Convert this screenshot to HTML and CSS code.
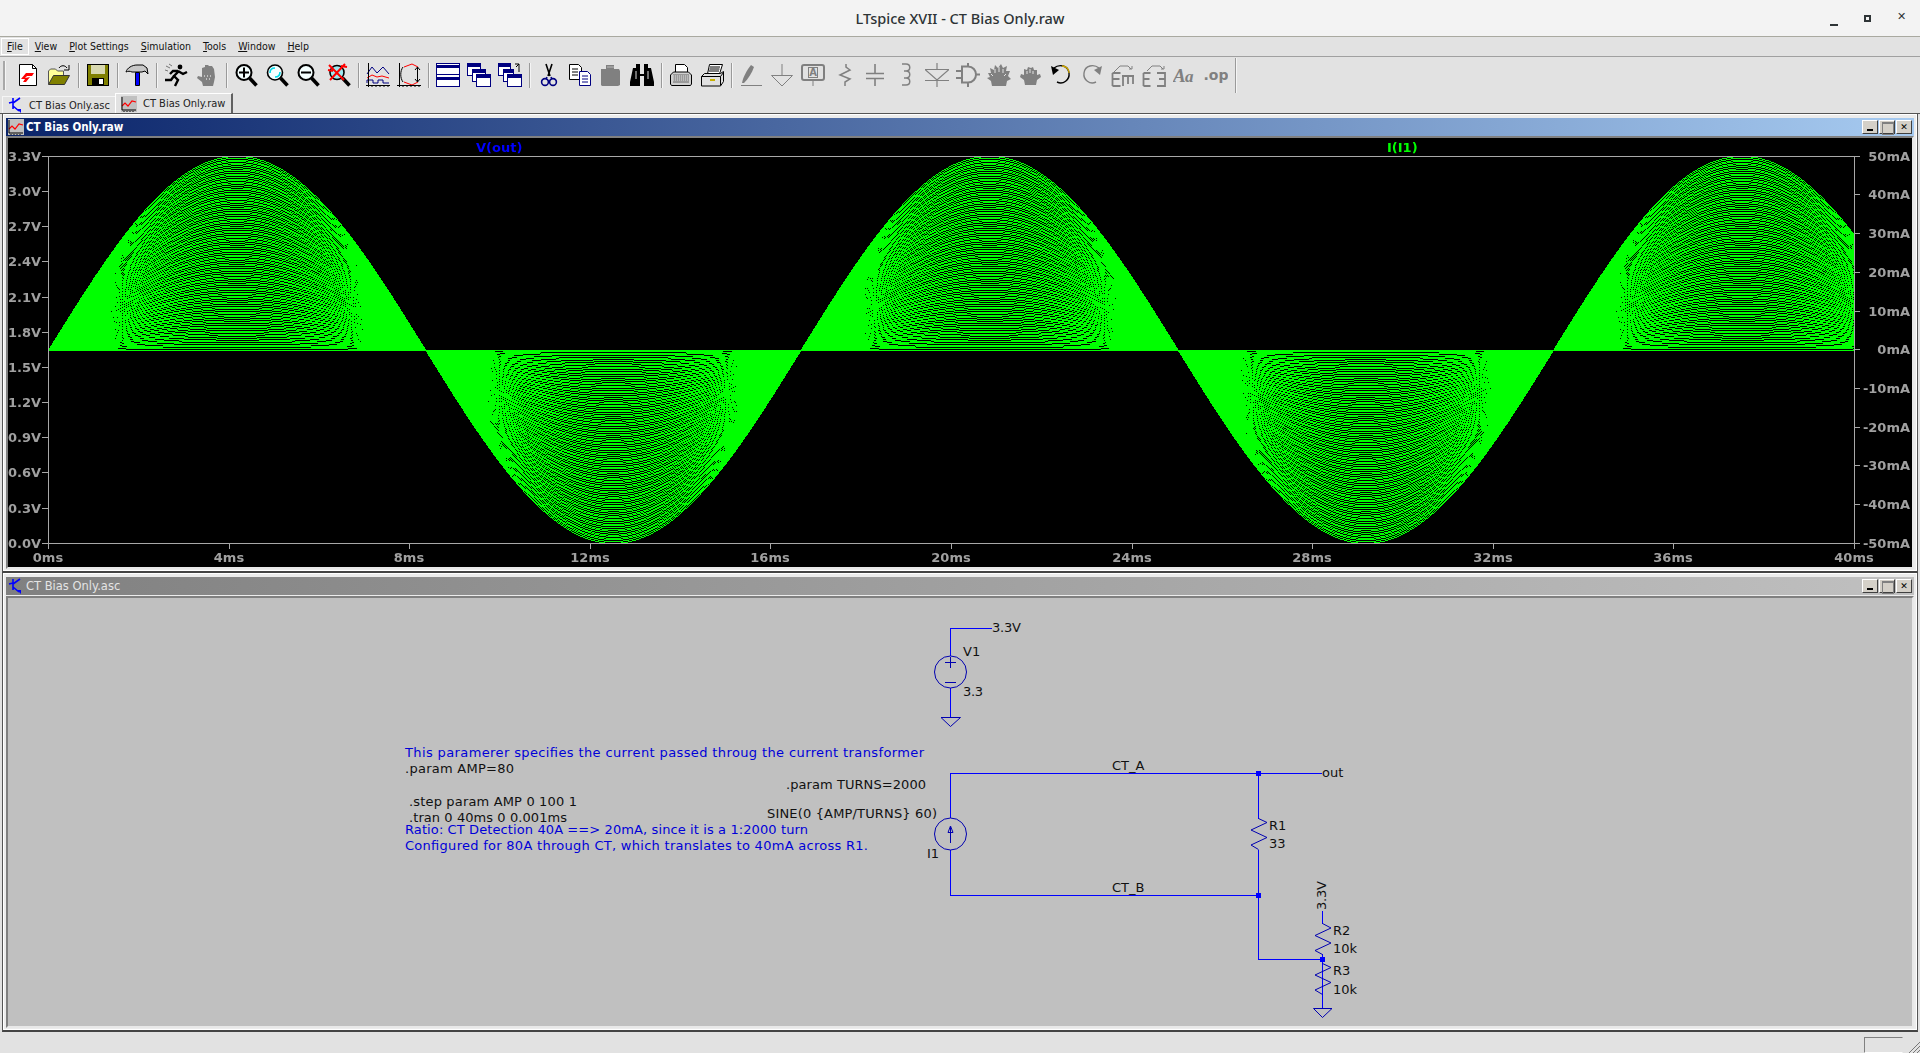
FILE: index.html
```html
<!DOCTYPE html>
<html lang="en">
<head>
  <meta charset="UTF-8" />
  <title>LTspice XVII - CT Bias Only.raw</title>
  <link rel="stylesheet" href="styles.css">
</head>
<body>

<svg class="defs" width="0" height="0">
  <symbol id="npn" viewBox="0 0 16 16">
    <path d="M5 1v11M5 5l-4 1M5 6l7-5M5 9l6 5" fill="none" stroke="#00f" stroke-width="1.6"/>
    <path d="M9 12h4v4z" fill="#00f"/>
  </symbol>
  <symbol id="miniplot" viewBox="0 0 16 16">
    <rect width="16" height="16" fill="#c0c0c0"/>
    <path d="M1 10l3-3 3 3 4-5 4 1" fill="none" stroke="#f00" stroke-width="1.2"/>
    <path d="M1 1v13h14M3 15v1M6 15v1M9 15v1M12 15v1" fill="none" stroke="#000"/>
  </symbol>
</svg>

<!-- Desktop title bar -->
<header class="titlebar">
  <span class="titlebar-text">LTspice XVII - CT Bias Only.raw</span>
  <div class="wm-buttons">
    <span class="wm-min"></span>
    <span class="wm-max"></span>
    <span class="wm-close">&#10005;</span>
  </div>
</header>

<!-- Menu -->
<nav class="menubar">
  <span class="menu-item menu-active"><u>F</u>ile</span>
  <span class="menu-item"><u>V</u>iew</span>
  <span class="menu-item"><u>P</u>lot Settings</span>
  <span class="menu-item"><u>S</u>imulation</span>
  <span class="menu-item"><u>T</u>ools</span>
  <span class="menu-item"><u>W</u>indow</span>
  <span class="menu-item"><u>H</u>elp</span>
</nav>

<!-- Toolbar -->
<div class="toolbar">
  <span class="grip"></span>
  <div class="tool"><svg class="ic" viewBox="0 0 24 24"><path d="M3.5 1.500h13l4 4v17h-17z" fill="#fff" stroke="#000"/><path d="M16.500 1.500v4h4" fill="none" stroke="#000"/><path d="M5 16l5-6h8l-2 3h-5l-2 2 5-1-4 5H7l2-3z" fill="#f00"/></svg></div>
  <div class="tool"><svg class="ic" viewBox="0 0 24 24"><path d="M1.500 21V8l2-2h5l2 2h6v4" fill="#ffff99" stroke="#555"/><path d="M1.500 21.500l5-9h16l-5 9z" fill="#808000" stroke="#333"/><path d="M12 5c2-3 6-3 8 0" fill="none" stroke="#000"/><path d="M22 2v5h-5" fill="none" stroke="#000"/></svg></div>
  <span class="sep"></span>
  <div class="tool"><svg class="ic" viewBox="0 0 24 24"><rect x="1.500" y="1.500" width="21" height="21" fill="#808000" stroke="#000"/><rect x="5" y="2" width="14" height="9" fill="#d8d8b0"/><rect x="6" y="15" width="12" height="7" fill="#000"/><rect x="13" y="16" width="4" height="5" fill="#fff"/></svg></div>
  <span class="sep"></span>
  <div class="tool"><svg class="ic" viewBox="0 0 24 24"><path d="M1 9c1-4 6-7 11-7h6l4 3 1 6-3-3-3 1H7C5 8 3 8 1 9z" fill="#c8c8c8" stroke="#000"/><path d="M10.500 9.500h4v13h-4z" fill="#00f" stroke="#000"/></svg></div>
  <span class="sep"></span>
  <div class="tool"><svg class="ic" viewBox="0 0 24 24"><circle cx="16" cy="4" r="2.400"/><path d="M15 8l-5 5 4 4-3 6M10 13l-3 4H1M14 8l5 3 4-2M14 8H9L6 11" fill="none" stroke="#000" stroke-width="2.400"/><path d="M2 3l4 2M1 7l3 1M5 1l3 2" fill="none" stroke="#777"/></svg></div>
  <div class="tool"><svg class="ic" viewBox="0 0 24 24"><path d="M8 23l-1-4-5-4 1-2 4 1V5l3-1V2l3 0 1 1 3 0 2 3 1 8-1 5-1 4z" fill="#808080"/><path d="M9 13h1M12 13h1M15 13h1M11 16h1M14 16h1" stroke="#fff"/></svg></div>
  <span class="sep"></span>
  <div class="tool"><svg class="ic" viewBox="0 0 24 24"><circle cx="10" cy="9.500" r="7.500" fill="#f4ffff" stroke="#000" stroke-width="2"/><path d="M15.500 15l7 7.500" stroke="#000" stroke-width="3.600"/><path d="M5 9.500h10M10 4.500v10" stroke="#000" stroke-width="2"/></svg></div>
  <div class="tool"><svg class="ic" viewBox="0 0 24 24"><circle cx="10" cy="9.500" r="7.500" fill="#f4ffff" stroke="#000" stroke-width="1.600"/><path d="M15.500 15l7 7.500" stroke="#000" stroke-width="3.600"/><path d="M5 10c0-3 2-5 5-5M15 9c0 3-2 5-5 5" fill="none" stroke="#00d8e8" stroke-width="1.600"/></svg></div>
  <div class="tool"><svg class="ic" viewBox="0 0 24 24"><circle cx="10" cy="9.500" r="7.500" fill="#f4ffff" stroke="#000" stroke-width="2"/><path d="M15.500 15l7 7.500" stroke="#000" stroke-width="3.600"/><path d="M5 9.500h10" stroke="#000" stroke-width="2"/></svg></div>
  <div class="tool"><svg class="ic" viewBox="0 0 24 24"><circle cx="10" cy="9.500" r="7" fill="#9fe8f0" stroke="#000" stroke-width="1.600"/><path d="M15.500 15l7 7.500" stroke="#000" stroke-width="3.600"/><path d="M2 2l15 15M18 1L3 17M1 7l5 1M14 3l6 1" stroke="#f00" stroke-width="2"/></svg></div>
  <span class="sep"></span>
  <div class="tool"><svg class="ic" viewBox="0 0 24 24"><path d="M1 11l5-7 5 6 6-6 6 7" fill="none" stroke="#000080"/><path d="M1 15l5-3 5 2 5-1 7 2" fill="none" stroke="#f00"/><path d="M1 20v-3h6v3h5v-3h5v3h6" fill="none" stroke="#000080"/><path d="M2.500 0v24M0 22.500h24M6 23v1M10 23v1M14 23v1M18 23v1M22 23v1" fill="none" stroke="#000"/></svg></div>
  <div class="tool"><svg class="ic" viewBox="0 0 24 24"><path d="M6 4C3 8 3 15 6 19" fill="none" stroke="#000"/><path d="M7 4l8-3 6 3M7 19l8 3 6-3" fill="none" stroke="#f00"/><path d="M20.500 4v15M18 7l2.500-3L23 7M18 16l2.500 3 2.500-3" fill="none" stroke="#000"/><path d="M2.500 0v24M0 22.500h24M6 23v1M10 23v1M14 23v1M18 23v1M22 23v1" fill="none" stroke="#000"/></svg></div>
  <span class="sep"></span>
  <div class="tool"><svg class="ic" viewBox="0 0 24 24"><rect x=".5" y=".5" width="23" height="23" fill="#fff" stroke="#000080"/><rect x="0" y="2" width="24" height="3" fill="#000080"/><rect x="0" y="14" width="24" height="3" fill="#000080"/><path d="M0 11.500h24" stroke="#000080"/></svg></div>
  <div class="tool"><svg class="ic" viewBox="0 0 24 24"><rect x=".5" y=".5" width="13" height="12" fill="#fff" stroke="#000080"/><rect y="1" width="14" height="3" fill="#000080"/><rect x="5.500" y="6.500" width="13" height="12" fill="#fff" stroke="#000080"/><rect x="5" y="7" width="14" height="3" fill="#000080"/><rect x="9.500" y="11.500" width="14" height="12" fill="#fff" stroke="#000080"/><rect x="9" y="12" width="15" height="3" fill="#000080"/></svg></div>
  <div class="tool"><svg class="ic" viewBox="0 0 24 24"><rect x=".5" y=".5" width="12" height="12" fill="#fff" stroke="#000080"/><rect y="1" width="13" height="3" fill="#000080"/><rect x="5.500" y="6.500" width="10" height="12" fill="#fff" stroke="#000080"/><rect x="5" y="7" width="11" height="3" fill="#000080"/><rect x="9.500" y="11.500" width="14" height="12" fill="#fff" stroke="#000080"/><rect x="9" y="12" width="15" height="3" fill="#000080"/><path d="M21 9V1M21 1l-3 3" fill="none" stroke="#000"/><path d="M21 1h-4" stroke="#000"/></svg></div>
  <span class="sep"></span>
  <div class="tool"><svg class="ic" viewBox="0 0 24 24"><path d="M9 1l4 12M15 1l-4 12" stroke="#000" stroke-width="1.600"/><circle cx="8" cy="19" r="3.400" fill="none" stroke="#000080" stroke-width="1.600"/><circle cx="16" cy="19" r="3.400" fill="none" stroke="#000080" stroke-width="1.600"/><path d="M10 14l-1 2M14 14l1 2" stroke="#000080" stroke-width="1.600"/></svg></div>
  <div class="tool"><svg class="ic" viewBox="0 0 24 24"><path d="M1.500 1.500h9l3 3v12h-12z" fill="#fff" stroke="#000"/><path d="M4 6h6M4 9h6M4 12h6" stroke="#000"/><path d="M11.500 8.500h8l3 3v11h-11z" fill="#fff" stroke="#000080"/><path d="M14 13h6M14 16h6M14 19h6" stroke="#000080"/></svg></div>
  <div class="tool"><svg class="ic" viewBox="0 0 24 24"><path d="M2 6h5V2h8v4h5l1 2v14l-2 1H3l-1-1z" fill="#808080"/><path d="M8 4h7" stroke="#bbb"/></svg></div>
  <div class="tool"><svg class="ic" viewBox="0 0 24 24"><path d="M3 5h3V1h4v10h4V1h4v4h3l3 14v4H14V13h-4v10H0v-4z"/><path d="M6 8v8M18 8v8" stroke="#ddd"/></svg></div>
  <span class="sep"></span>
  <div class="tool"><svg class="ic" viewBox="0 0 24 24"><path d="M6.500 9.500V1.500h9l3 3v5" fill="#fff" stroke="#000"/><path d="M1.500 12l3-3h15l3 3v9l-1 1.500h-19l-1-1.500z" fill="#d0d0d0" stroke="#000"/><rect x="4" y="11" width="16" height="9" fill="#9a9a9a"/><path d="M4 13h16M4 15h16M4 17h16" stroke="#ddd" stroke-dasharray="1 1"/></svg></div>
  <div class="tool"><svg class="ic" viewBox="0 0 24 24"><path d="M7.500 11l2-9.500h13l-3 9.500z" fill="#fff" stroke="#000"/><path d="M10 4h10M9.500 6h10M9 8h10" stroke="#000"/><path d="M1.500 13.500l3-3h16l3-2v10l-3 4.500h-19z" fill="#e0e0e0" stroke="#000"/><path d="M1.500 13.500h19v9M20.500 13.500l3-4" fill="none" stroke="#000"/><path d="M10 17h5" stroke="#c8b000" stroke-width="2"/></svg></div>
  <span class="sep"></span>
  <div class="tool"><svg class="ic" viewBox="0 0 24 24"><path d="M3 20c1-6 5-13 9-18l3 2c-2 6-6 12-10 16z" fill="#808080"/><path d="M2 22.500h21" stroke="#808080"/></svg></div>
  <div class="tool"><svg class="ic ic-off" viewBox="0 0 24 24"><path d="M12 1v12M1.500 12.500h21L12 23z"/></svg></div>
  <div class="tool"><svg class="ic ic-off" viewBox="0 0 24 24"><rect x="1" y="2" width="22" height="15" rx="2" stroke-width="2"/><rect x="7.500" y="4.500" width="9" height="10"/><text x="12" y="13" class="ic-letter" text-anchor="middle">A</text><path d="M12 17v6"/></svg></div>
  <div class="tool"><svg class="ic ic-off" viewBox="0 0 24 24"><path d="M14 1v3l4 3-10 5 10 4-5 3v4" stroke-width="1.500"/></svg></div>
  <div class="tool"><svg class="ic ic-off" viewBox="0 0 24 24"><path d="M12 1v9M3 10.500h18M3 15.500h18M12 16v7" stroke-width="1.600"/></svg></div>
  <div class="tool"><svg class="ic ic-off" viewBox="0 0 24 24"><path d="M8 1h4c5 0 5 7 0 7h-2M10 8h2c5 0 5 7 0 7h-2M10 15h2c5 0 5 7 0 7H8" stroke-width="1.500"/></svg></div>
  <div class="tool"><svg class="ic ic-off" viewBox="0 0 24 24"><path d="M12 0v6M0 6.500h24L12 17zM0 17.500h24M12 18v6" stroke-width="1.200"/></svg></div>
  <div class="tool"><svg class="ic ic-off" viewBox="0 0 24 24"><path d="M6 3.500h6c5 0 8 4 8 8s-3 8-8 8H6zM0 8h6M0 15h6M20 11.500h4M12 0v3M12 20v4" stroke-width="2"/></svg></div>
  <div class="tool"><svg class="ic" viewBox="0 0 24 24"><path d="M5 23l-1-5-4-3 3-1-2-4 3 0-1-5 4 2 1-5 3 3 3-4 2 4 4-2-1 5 4 0-2 5 3 3-4 2-1 5z" fill="#808080"/><path d="M8 6v4M12 4v5M16 6v4M4 11l2 2M19 11l-2 2" stroke="#e2e2e2"/></svg></div>
  <div class="tool"><svg class="ic" viewBox="0 0 24 24"><path d="M7 22l-1-5-4-3 1-3 3 1V6l3 1 1-3 3 1 2-1 1 3h3v5l3-1 1 3-4 3-1 5z" fill="#808080"/><path d="M9 8v3M12 6v4M15 8v3" stroke="#e2e2e2"/></svg></div>
  <div class="tool"><svg class="ic" viewBox="0 0 24 24"><path d="M5 5c5-4 14-3 15 5 1 7-6 12-12 9" fill="none" stroke="#000" stroke-width="1.400"/><path d="M13 3c4 0 7 3 7 7" fill="none" stroke="#d0a800" stroke-width="1.400"/><path d="M2 3l2 9 6-5z"/></svg></div>
  <div class="tool"><svg class="ic" viewBox="0 0 24 24"><path d="M19 5c-5-4-14-3-15 5-1 7 6 12 12 9" fill="none" stroke="#808080" stroke-width="1.400"/><path d="M22 3l-2 9-6-5z" fill="#808080"/></svg></div>
  <div class="tool"><svg class="ic ic-off" viewBox="0 0 24 24"><path d="M3 9l6-6h8l3 3M18 6l3 0 0-3" stroke-width="1"/><path d="M1.500 10h8M1.500 10v13M1.500 16h7M1.500 23h8M11 13h12M12 13v10M17 13v8M22 13v8" stroke-width="1.800"/></svg></div>
  <div class="tool"><svg class="ic ic-off" viewBox="0 0 24 24"><path d="M5 8l5-5h8l3 3M19 6l3 0 0-3" stroke-width="1"/><path d="M1.500 10h7M1.500 10v13M1.500 16h6M1.500 23h7M15 10h8v13h-8M17 16h6" stroke-width="1.800"/></svg></div>
  <div class="tool"><svg class="ic" viewBox="0 0 24 24"><text x="0" y="19" class="ic-aa">A</text><text x="12" y="19" class="ic-aa-small">a</text></svg></div>
  <div class="tool"><svg class="ic" viewBox="0 0 24 24"><text x="12" y="17" class="ic-op" text-anchor="middle">.op</text></svg></div>
  <span class="sep sep-tall"></span>
</div>

<!-- Document tabs -->
<div class="tabs">
  <div class="tab">
    <svg class="tab-icon"><use href="#npn"/></svg>
    <span>CT Bias Only.asc</span>
  </div>
  <div class="tab tab-active">
    <svg class="tab-icon"><use href="#miniplot"/></svg>
    <span>CT Bias Only.raw</span>
  </div>
</div>

<!-- MDI area -->
<main class="mdi">
  <section class="win">
    <div class="win-title win-title-active">
      <svg class="win-icon"><use href="#miniplot"/></svg>
      <span class="win-name win-name-active">CT Bias Only.raw</span>
      <div class="win-buttons">
        <span class="win-btn win-btn-min"></span>
        <span class="win-btn win-btn-max"></span>
        <span class="win-btn win-btn-close">&#10005;</span>
      </div>
    </div>
    <div class="win-body plot">
      <canvas id="traces" width="1904" height="429"></canvas>
      <svg class="plot-axes" viewBox="8 138 1904 429">
        <path class="axis" d="M42 156.500H1860M42 543.500H1860M48.500 156V549M1854.500 156V549
          M42 191.500h6M42 226.500h6M42 261.500h6M42 297.500h6M42 332.500h6M42 367.500h6M42 402.500h6M42 437.500h6M42 472.500h6M42 508.500h6
          M1855 194.500h5M1855 233.500h5M1855 272.500h5M1855 311.500h5M1855 349.500h5M1855 388.500h5M1855 427.500h5M1855 465.500h5M1855 504.500h5
          M229.500 544v5M409.500 544v5M590.500 544v5M770.500 544v5M951.500 544v5M1132.500 544v5M1312.500 544v5M1493.500 544v5M1673.500 544v5"/>
        <text class="trace-v" x="476" y="152">V(out)</text>
        <text class="trace-i" x="1387" y="152">I(I1)</text>
        <g class="ticks ticks-end">
          <text x="41" y="161">3.3V</text>
          <text x="41" y="196">3.0V</text>
          <text x="41" y="231">2.7V</text>
          <text x="41" y="266">2.4V</text>
          <text x="41" y="302">2.1V</text>
          <text x="41" y="337">1.8V</text>
          <text x="41" y="372">1.5V</text>
          <text x="41" y="407">1.2V</text>
          <text x="41" y="442">0.9V</text>
          <text x="41" y="477">0.6V</text>
          <text x="41" y="513">0.3V</text>
          <text x="41" y="548">0.0V</text>
          <text x="1910" y="161">50mA</text>
          <text x="1910" y="199">40mA</text>
          <text x="1910" y="238">30mA</text>
          <text x="1910" y="277">20mA</text>
          <text x="1910" y="316">10mA</text>
          <text x="1910" y="354">0mA</text>
          <text x="1910" y="393">-10mA</text>
          <text x="1910" y="432">-20mA</text>
          <text x="1910" y="470">-30mA</text>
          <text x="1910" y="509">-40mA</text>
          <text x="1910" y="548">-50mA</text>
        </g>
        <g class="ticks ticks-mid">
          <text x="48" y="562">0ms</text>
          <text x="229" y="562">4ms</text>
          <text x="409" y="562">8ms</text>
          <text x="590" y="562">12ms</text>
          <text x="770" y="562">16ms</text>
          <text x="951" y="562">20ms</text>
          <text x="1132" y="562">24ms</text>
          <text x="1312" y="562">28ms</text>
          <text x="1493" y="562">32ms</text>
          <text x="1673" y="562">36ms</text>
          <text x="1854" y="562">40ms</text>
        </g>
      </svg>
    </div>
  </section>

  <section class="win">
    <div class="win-title win-title-idle">
      <svg class="win-icon"><use href="#npn"/></svg>
      <span class="win-name">CT Bias Only.asc</span>
      <div class="win-buttons">
        <span class="win-btn win-btn-min"></span>
        <span class="win-btn win-btn-max"></span>
        <span class="win-btn win-btn-close">&#10005;</span>
      </div>
    </div>
    <div class="win-body schematic">
      <svg class="sch" viewBox="8 598 1904 428">
        <path class="wire" d="M950.500 656V628.500H992M950.500 688V717.500"/>
        <path class="wire" d="M950.500 818V773.500H1322M950.500 850V895.500H1258.500M1258.500 773.500V818.500M1258.500 849.500V959.500H1322.500"/>
        <path class="wire" d="M1322.500 911V923.500M1322.500 954V1008"/>
        <path class="sym" d="M941 717.500H960.500L950.500 726.500Z"/>
        <path class="sym" d="M1313.500 1008.500H1332L1322.500 1017.500Z"/>
        <circle class="sym" cx="950.500" cy="672" r="16"/>
        <circle class="sym" cx="950.500" cy="834" r="16"/>
        <path class="sym" d="M945 662.500H956M950.500 657V668M945 682.500H956"/>
        <path class="sym" d="M950.500 843V827M948 832.500L950.500 826L953 832.500Z"/>
        <path class="sym" d="M1258.500 818.500L1267 822.500L1251 830L1267 837.500L1251 845L1258.500 849.500"/>
        <path class="sym" d="M1322.500 923.500L1331 928L1315 935.500L1331 943L1315 950.500L1322.500 954.500"/>
        <path class="sym" d="M1322.500 963.500L1331 967.500L1315 975L1331 982.500L1315 990L1322.500 994.500"/>
        <rect class="dot" x="1256" y="771" width="5" height="5"/>
        <rect class="dot" x="1256" y="893" width="5" height="5"/>
        <rect class="dot" x="1320" y="957" width="5" height="5"/>

        <text class="note" x="405" y="757" textLength="519">This paramerer specifies the current passed throug the current transformer</text>
        <text class="note" x="405" y="834" textLength="403">Ratio: CT Detection 40A ==&gt; 20mA, since it is a 1:2000 turn</text>
        <text class="note" x="405" y="850" textLength="463">Configured for 80A through CT, which translates to 40mA across R1.</text>
        <text class="lbl" x="405" y="773" textLength="109">.param AMP=80</text>
        <text class="lbl" x="786" y="789" textLength="140">.param TURNS=2000</text>
        <text class="lbl" x="409" y="806" textLength="168">.step param AMP 0 100 1</text>
        <text class="lbl" x="409" y="822" textLength="158">.tran 0 40ms 0 0.001ms</text>
        <text class="lbl" x="767" y="818" textLength="170">SINE(0 {AMP/TURNS} 60)</text>
        <text class="lbl" x="992" y="632" textLength="29">3.3V</text>
        <text class="lbl" x="963" y="656">V1</text>
        <text class="lbl" x="963" y="696" textLength="20">3.3</text>
        <text class="lbl" x="927" y="858">I1</text>
        <text class="lbl" x="1112" y="770">CT_A</text>
        <text class="lbl" x="1112" y="892">CT_B</text>
        <text class="lbl" x="1322" y="777">out</text>
        <text class="lbl" x="1269" y="830">R1</text>
        <text class="lbl" x="1269" y="848">33</text>
        <text class="lbl" x="1333" y="935">R2</text>
        <text class="lbl" x="1333" y="953">10k</text>
        <text class="lbl" x="1333" y="975">R3</text>
        <text class="lbl" x="1333" y="994">10k</text>
        <text class="lbl" transform="translate(1326 910) rotate(-90)" textLength="29">3.3V</text>
      </svg>
    </div>
  </section>
</main>

<footer class="statusbar">
  <span class="status-cell"></span>
  <svg class="status-grip" viewBox="0 0 11 11"><path d="M0 11L11 0M4 11L11 4M8 11L11 8" stroke="#777" fill="none"/></svg>
</footer>

<script src="plot.js"></script>
</body>
</html>
```

FILE: styles.css
```css
* {
  box-sizing: border-box;
}
html, body {
  margin: 0;
  padding: 0;
}
body {
  width: 1920px;
  height: 1053px;
  overflow: hidden;
  display: flex;
  flex-direction: column;
  background: #e2e2e2;
  font-family: "DejaVu Sans Condensed", "DejaVu Sans", sans-serif;
  font-stretch: condensed;
  font-size: 11px;
  color: #222;
}
.defs {
  position: absolute;
}

/* desktop title bar */
.titlebar {
  height: 37px;
  flex: none;
  display: flex;
  align-items: center;
  justify-content: center;
  background: #f3f3f3;
  border-bottom: 1px solid #a9a9a0;
  position: relative;
}
.titlebar-text {
  font-family: "Noto Sans", sans-serif;
  font-stretch: normal;
  font-size: 14.5px;
  font-weight: 500;
  color: #2e3436;
}
.wm-buttons {
  position: absolute;
  right: 0;
  top: 0;
  height: 36px;
  width: 105px;
}
.wm-min {
  position: absolute;
  left: 15px;
  top: 24px;
  width: 8px;
  height: 2px;
  background: #2e3436;
}
.wm-max {
  position: absolute;
  left: 49px;
  top: 15px;
  width: 7px;
  height: 7px;
  border: 2px solid #2e3436;
}
.wm-close {
  position: absolute;
  left: 82px;
  top: 10px;
  font-family: "DejaVu Sans", sans-serif;
  font-stretch: normal;
  font-size: 11px;
  font-weight: bold;
  color: #2e3436;
}

/* menu */
.menubar {
  height: 20px;
  flex: none;
  display: flex;
  align-items: center;
  padding-left: 1px;
  border-bottom: 1px solid #a0a0a0;
  font-size: 10.5px;
}
.menu-item {
  padding: 0 6px;
  line-height: 17px;
  color: #111;
  white-space: nowrap;
}
.menu-active {
  box-shadow: inset 1px 1px 0 #fff, inset -1px -1px 0 #fff;
}

/* toolbar */
.toolbar {
  height: 36px;
  flex: none;
  display: flex;
  align-items: center;
  padding-left: 3px;
}
.grip {
  width: 2px;
  height: 29px;
  margin-right: 7px;
  flex: none;
  background: #a8a8a8;
  box-shadow: 1px 0 0 #f5f5f5;
}
.tool {
  width: 31px;
  height: 24px;
  flex: none;
  display: flex;
  justify-content: center;
}
.ic {
  width: 24px;
  height: 24px;
  display: block;
}
.ic-off {
  fill: none;
  stroke: #808080;
}
.ic-letter {
  font-family: "DejaVu Sans", sans-serif;
  font-stretch: normal;
  font-size: 10px;
  font-weight: bold;
  fill: #808080;
  stroke: none;
}
.ic-aa, .ic-aa-small {
  font-family: "Liberation Serif", serif;
  font-stretch: normal;
  font-style: italic;
  font-weight: bold;
  fill: #808080;
}
.ic-aa {
  font-size: 19px;
}
.ic-aa-small {
  font-size: 17px;
}
.ic-op {
  font-family: "DejaVu Sans", sans-serif;
  font-stretch: normal;
  font-size: 14px;
  font-weight: bold;
  fill: #808080;
}
.sep {
  width: 1px;
  height: 25px;
  margin: 0 3px 0 4px;
  flex: none;
  background: #9a9a9a;
  box-shadow: 1px 0 0 #f5f5f5;
}
.sep-tall {
  height: 35px;
}

/* document tabs */
.tabs {
  height: 20px;
  flex: none;
  display: flex;
  align-items: flex-end;
  padding-left: 2px;
}
.tab {
  width: 113px;
  height: 17px;
  display: flex;
  align-items: center;
  gap: 5px;
  padding-left: 5px;
  border-top: 1px solid #f5f5f5;
  border-left: 1px solid #f5f5f5;
  color: #222;
  white-space: nowrap;
}
.tab-active {
  width: 118px;
  height: 20px;
  gap: 6px;
  border-top: 1px solid #fff;
  border-left: 1px solid #fff;
  border-right: 2px solid #606060;
}
.tab-icon {
  width: 16px;
  height: 16px;
  flex: none;
}

/* MDI windows */
.mdi {
  flex: none;
  height: 919px;
  padding: 0 2px;
  border-top: 1px solid #555;
}
.win {
  height: 459px;
  padding: 4px 3px 2px;
  background: #ececec;
  border-left: 1px solid #555;
  border-right: 1px solid #555;
  border-bottom: 2px solid #444;
  box-shadow: inset 1px 1px 0 #fff, inset -1px -1px 0 #fff;
}
.win-title {
  height: 18px;
  display: flex;
  align-items: center;
  padding-left: 2px;
  color: #e4e4e4;
  font-family: "DejaVu Sans", sans-serif;
  font-stretch: normal;
  font-size: 11.5px;
}
.win-title-active {
  background: linear-gradient(to right, #0a246a, #a6caf0);
}
.win-title-idle {
  background: linear-gradient(to right, #808080, #c0c0c0);
}
.win-icon {
  width: 16px;
  height: 16px;
  flex: none;
}
.win-name {
  margin-left: 2px;
}
.win-name-active {
  color: #fff;
  font-family: "DejaVu Sans Condensed", "DejaVu Sans", sans-serif;
  font-stretch: condensed;
  font-weight: bold;
}
.win-buttons {
  display: flex;
  margin-left: auto;
  margin-right: 2px;
}
.win-btn {
  width: 16px;
  height: 14px;
  margin-left: 1px;
  background: #d4d0c8;
  border: 1px solid;
  border-color: #fff #404040 #404040 #fff;
  color: #000;
  font-family: "DejaVu Sans", sans-serif;
  font-stretch: normal;
  font-size: 9px;
  line-height: 12px;
  text-align: center;
  position: relative;
}
.win-btn-min::after {
  content: "";
  position: absolute;
  left: 4px;
  bottom: 2px;
  width: 6px;
  height: 2px;
  background: #000;
}
.win-btn-max::after {
  content: "";
  position: absolute;
  left: 2px;
  top: 1px;
  width: 10px;
  height: 10px;
  border: 1px solid #808080;
  border-top-width: 2px;
}
.win-body {
  border: 2px solid;
  border-color: #808080 #e8e8e8 #e8e8e8 #808080;
  position: relative;
}
.plot {
  height: 433px;
  background: #000;
}
.schematic {
  margin-top: 1px;
  height: 432px;
  background: #c0c0c0;
}

/* plot pane */
#traces {
  display: block;
  position: absolute;
  left: 0;
  top: 0;
}
.plot-axes {
  display: block;
  position: absolute;
  left: 0;
  top: 0;
  width: 1904px;
  height: 429px;
}
.axis {
  fill: none;
  stroke: #a8a8a8;
  stroke-width: 1;
}
.plot-axes text {
  font-family: "DejaVu Sans", sans-serif;
  font-stretch: normal;
  font-size: 13px;
  font-weight: bold;
}
.trace-v {
  fill: #0000ff;
}
.trace-i {
  fill: #00ff00;
}
.ticks {
  fill: #a0a0a0;
}
.ticks-end {
  text-anchor: end;
}
.ticks-mid {
  text-anchor: middle;
}

/* schematic pane */
.sch {
  display: block;
  width: 1904px;
  height: 428px;
}
.wire {
  fill: none;
  stroke: #0000ff;
  stroke-width: 1;
  shape-rendering: crispEdges;
}
.sym {
  fill: none;
  stroke: #0000b0;
  stroke-width: 1;
}
.dot {
  fill: #0000ff;
}
.sch text {
  font-family: "DejaVu Sans", sans-serif;
  font-stretch: normal;
  font-size: 13px;
}
.sch .note {
  fill: #0000d8;
}
.sch .lbl {
  fill: #111;
}

/* status bar */
.statusbar {
  flex: 1;
  display: flex;
  justify-content: flex-end;
  align-items: flex-end;
  min-height: 0;
  position: relative;
}
.status-cell {
  width: 39px;
  height: 16px;
  margin-right: 17px;
  border: 1px solid;
  border-color: #808080 #e2e2e2 #fff #808080;
}
.status-grip {
  position: absolute;
  right: 0;
  bottom: 0;
  width: 11px;
  height: 11px;
}
```

FILE: plot.js
```js
// one sine per step, spaced so the lobes have the density of the original plot
const canvas = document.getElementById('traces');
const ctx = canvas.getContext('2d');

const left = 40;      // x of 0ms inside the pane
const width = 1806;   // 40ms
const mid = 211.5;    // y of 1.65V / 0mA
const swing = 193.5;  // y for 1.65V / 50mA
const traces = 112;

ctx.fillStyle = '#00ff00';

for (let n = 0; n <= traces; n++) {
  // small fixed offset per trace so the rows don't beat into big arcs
  const jitter = n === traces ? 0 : (((n * 37) % 11) - 5) * 0.07;
  const amp = Math.max(0, (n / traces) * swing + jitter);
  let prev = Math.round(mid);
  for (let x = 0; x <= width; x++) {
    const t = (x / width) * 0.04;
    const y = Math.round(mid - amp * Math.sin(2 * Math.PI * 60 * t));
    ctx.fillRect(left + x, Math.min(prev, y), 1, Math.max(1, Math.abs(y - prev)));
    prev = y;
  }
}
```
